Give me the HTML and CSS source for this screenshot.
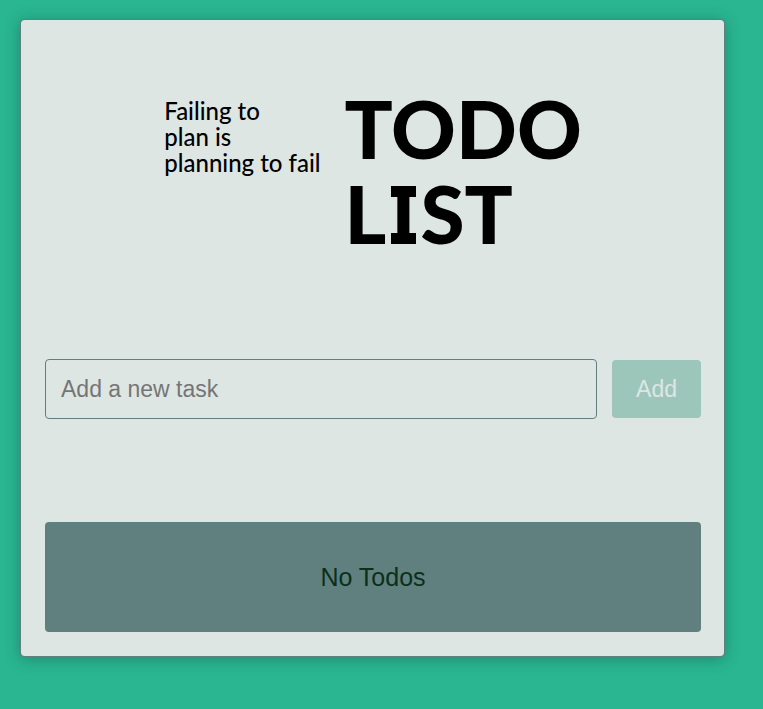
FILE: index.html
```html
<!DOCTYPE html>
<html lang="en">
<head>
<meta charset="utf-8">
<meta name="viewport" content="width=device-width, initial-scale=1">
<title>Todo List</title>
<link rel="stylesheet" href="styles.css">
</head>
<body>
<main class="card">
  <header class="banner">
    <p class="motto">Failing to<br>plan is<br>planning to fail</p>
    <h1 class="title">TODO<br>L<span class="slab">I</span>ST</h1>
  </header>
  <form class="add-form">
    <input class="task-input" type="text" placeholder="Add a new task" aria-label="New task">
    <button class="add-button" type="submit" disabled>Add</button>
  </form>
  <p class="empty">No Todos</p>
</main>
</body>
</html>
```
FILE: styles.css
```css
* {
  box-sizing: border-box;
}

body {
  margin: 0;
  padding: 19px 38px 52px 20px;
  min-height: 100vh;
  background: #29b691;
  font-family: "Liberation Sans", Arial, sans-serif;
  font-size: 23px;
  color: #0c2f1b;
}

.card {
  padding: 66px 23px 24px 24px;
  background: #dee6e4;
  background-clip: padding-box;
  border: 1px solid #5f807e;
  border-radius: 4px;
  box-shadow: 0 2px 16px rgba(0, 0, 0, 0.25);
}

.banner {
  display: flex;
  justify-content: center;
  gap: 24px;
  margin-bottom: 103px;
  font-family: Lato, "Liberation Sans", sans-serif;
  color: #000;
}

.motto {
  margin: 12px 0 0;
  font-size: 24px;
  font-weight: 500;
  line-height: 26px;
}

.title {
  margin: 0;
  font-size: 80px;
  font-weight: 900;
  line-height: 85px;
}

/* Slab bars across the top and foot of the letter I */
.slab {
  position: relative;
  margin: 0 5px;
}

.slab::before,
.slab::after {
  content: "";
  position: absolute;
  left: 0;
  right: 0;
  height: 11px;
  background: #000;
}

.slab::before {
  top: 21px;
}

.slab::after {
  bottom: 17px;
}

.add-form {
  display: flex;
  align-items: center;
  gap: 15px;
  margin-bottom: 103px;
}

.task-input {
  flex: 1;
  min-width: 0;
  height: 60px;
  padding: 0 15px;
  border: 1px solid #5f807e;
  border-radius: 4px;
  background: transparent;
  font: inherit;
}

.task-input::placeholder {
  color: #757575;
}

.add-button {
  height: 58px;
  padding: 0 24px;
  border: 0;
  border-radius: 4px;
  background: #9dc6bb;
  color: #dee6e4;
  font: inherit;
}

.empty {
  margin: 0;
  padding: 41px 24px;
  border-radius: 4px;
  background: #5f807e;
  font-size: 25px;
  line-height: 28px;
  text-align: center;
}
```
